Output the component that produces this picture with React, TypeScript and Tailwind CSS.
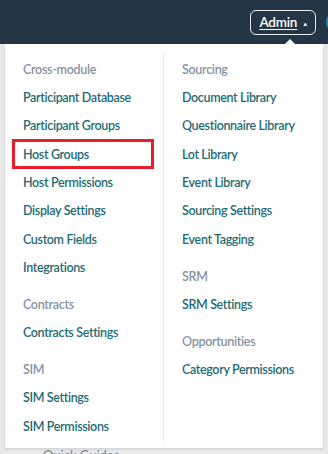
import React from "react";

type Section = { title: string; items: string[] };

const leftSections: Section[] = [
  {
    title: "Cross-module",
    items: [
      "Participant Database",
      "Participant Groups",
      "Host Groups",
      "Host Permissions",
      "Display Settings",
      "Custom Fields",
      "Integrations",
    ],
  },
  { title: "Contracts", items: ["Contracts Settings"] },
  { title: "SIM", items: ["SIM Settings", "SIM Permissions"] },
];

const rightSections: Section[] = [
  {
    title: "Sourcing",
    items: [
      "Document Library",
      "Questionnaire Library",
      "Lot Library",
      "Event Library",
      "Sourcing Settings",
      "Event Tagging",
    ],
  },
  { title: "SRM", items: ["SRM Settings"] },
  { title: "Opportunities", items: ["Category Permissions"] },
];

function MenuColumn({ sections, divider }: { sections: Section[]; divider?: boolean }) {
  return (
    <div className={`flex w-[160px] flex-col pt-[3px] ${divider ? "border-r border-[#e6e8ea]" : ""}`}>
      {sections.map((section, i) => (
        <div key={section.title} className={i > 0 ? "mt-[8.5px]" : ""}>
          <div className="flex h-[28.33px] items-center pl-[18px] text-[12.5px] font-semibold tracking-[-0.3px] text-[#8593a3]">
            {section.title}
          </div>
          {section.items.map((item) => (
            <div
              key={item}
              className="relative flex h-[28.33px] items-center pl-[18px] text-[12.5px] font-semibold tracking-[-0.35px] text-[#1e6b75]"
            >
              {item}
              {item === "Host Groups" && (
                <div className="absolute top-[-2px] left-[7px] h-[30px] w-[142px] border-[3px] border-[#e81f2a]" />
              )}
            </div>
          ))}
        </div>
      ))}
    </div>
  );
}

export default function App() {
  return (
    <div
      className="h-[454px] w-[328px] overflow-hidden bg-[#e8e9ea]"
      style={{ fontFamily: "Lato, 'Open Sans', sans-serif" }}
    >
      <header className="flex h-[44px] items-center justify-end gap-[10px] overflow-hidden bg-[#243546] pl-3">
        <button className="flex h-[25px] items-center gap-[5px] rounded-[6px] border border-white/90 pr-[7px] pl-[8px] text-[13.5px] font-semibold tracking-[-0.2px] text-white">
          <span className="underline underline-offset-2">Admin</span>
          <span className="mt-[2px] text-[6px]">▲</span>
        </button>
        <div className="-mr-[20px] h-[22px] w-[22px] shrink-0 rounded-full bg-[#1b8d9c]" />
      </header>

      <div className="relative mx-[5px] flex bg-white pt-[9px] pb-[7px] shadow-[0_1px_3px_rgba(0,0,0,0.12)]">
        <div className="absolute -top-[5px] left-[279px] h-0 w-0 border-x-[6px] border-b-[6px] border-x-transparent border-b-white" />
        <MenuColumn sections={leftSections} divider />
        <MenuColumn sections={rightSections} />
      </div>

      <div className="pl-[43px] text-[13px] leading-[14px] text-[#7b8794]">Quick Guides</div>
    </div>
  );
}
